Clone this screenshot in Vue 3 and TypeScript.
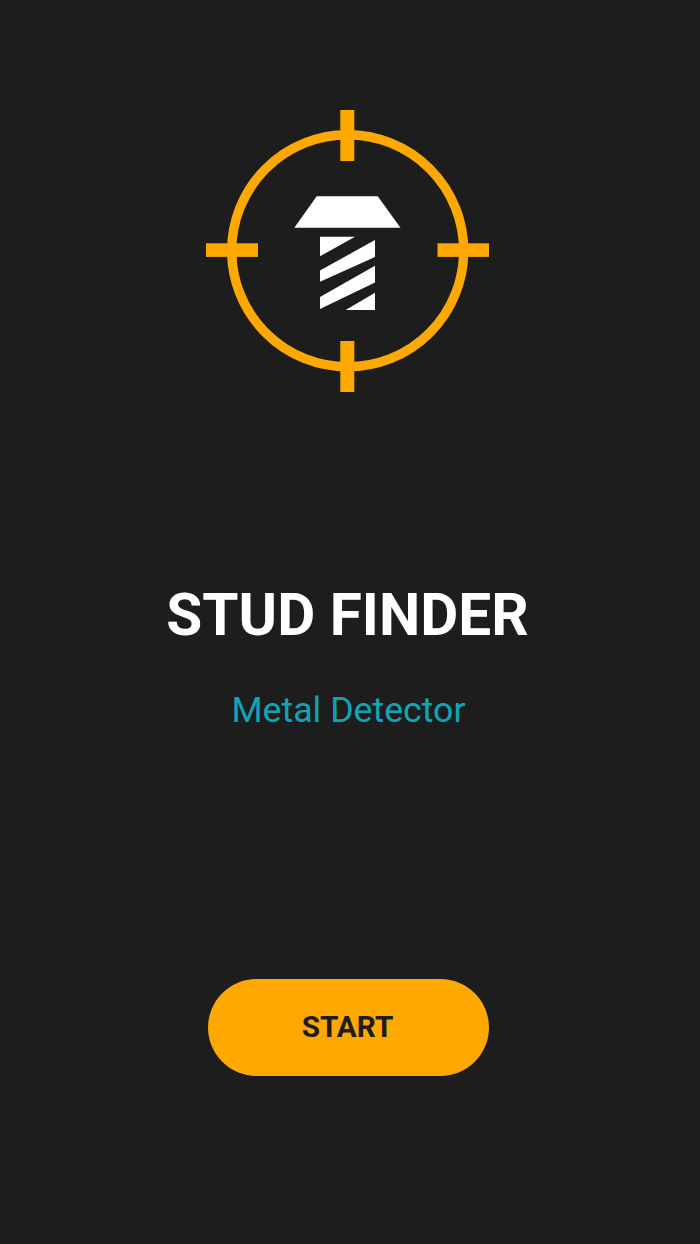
<template>
  <div class="splash">
    <!-- crosshair with the screw in the middle -->
    <svg class="logo" width="283" height="282" viewBox="206 110 283 282" aria-hidden="true">
      <circle cx="347.7" cy="250.8" r="116" fill="none" stroke="#ffa800" stroke-width="9.4" />
      <g fill="#ffa800">
        <rect x="340.3" y="110" width="14" height="51" />
        <rect x="340.3" y="341" width="14" height="51" />
        <rect x="206" y="243.3" width="52" height="13.6" />
        <rect x="437.5" y="243.3" width="51.5" height="13.6" />
      </g>
      <g fill="#ffffff">
        <polygon points="316.7,196.3 377.7,196.3 400.5,227.7 294.3,227.7" />
        <polygon points="320,236.7 355,236.7 320,256.3" />
        <polygon points="375,240 375,257 320,281.7 320,270.5" />
        <polygon points="375,265.7 375,282.5 320,309 320,297" />
        <polygon points="375,292.7 375,310 345.7,310" />
      </g>
    </svg>

    <h1 class="title">{{ title }}</h1>
    <p class="subtitle">{{ subtitle }}</p>

    <button class="start-btn" type="button">START</button>
  </div>
</template>

<script setup lang="ts">
const title = 'STUD FINDER'
const subtitle = 'Metal Detector'
</script>

<style>
html,
body {
  margin: 0;
  background: #1d1d1d;
}
</style>

<style scoped>
.splash {
  width: 700px;
  height: 1244px;
  box-sizing: border-box;
  padding: 110px 5px 0 0;
  background: #1d1d1d;
  display: flex;
  flex-direction: column;
  align-items: center;
  font-family: Roboto, 'Noto Sans', sans-serif;
  overflow: hidden;
}

.logo {
  display: block;
  flex: none;
}

.title {
  margin: 190px 0 0;
  font-size: 58.5px;
  line-height: 66px;
  font-weight: 700;
  color: #ffffff;
}

.subtitle {
  margin: 41px 0 0 2px;
  font-size: 35.7px;
  line-height: 42px;
  font-weight: 400;
  color: #10a5b5;
}

.start-btn {
  margin: 248px 0 0 2px;
  width: 281px;
  height: 97px;
  padding: 0 2px 2px 0;
  border: none;
  border-radius: 49px;
  background: #ffa800;
  color: #1d1d1d;
  font-family: inherit;
  font-size: 29.7px;
  font-weight: 700;
}
</style>
